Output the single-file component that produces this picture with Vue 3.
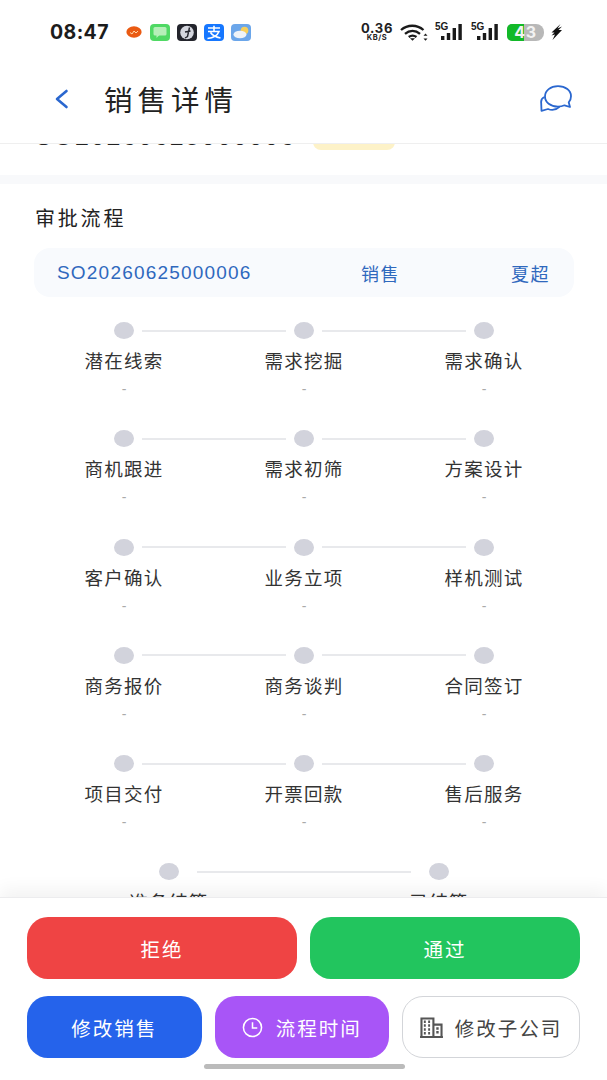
<script setup>
const idLine = { no: 'SO20260625000006', kind: '销售', owner: '夏超' }

// Approval stages, grouped by the row they sit on
const rows = [
  ['潜在线索', '需求挖掘', '需求确认'],
  ['商机跟进', '需求初筛', '方案设计'],
  ['客户确认', '业务立项', '样机测试'],
  ['商务报价', '商务谈判', '合同签订'],
  ['项目交付', '开票回款', '售后服务'],
  ['准备结算', '已结算']
]
</script>

<template>
  <div class="phone">
    <header class="top">
      <div class="status">
        <span class="clock">08:47</span>
        <div class="apps">
          <svg class="app-dot" viewBox="0 0 16 12"><ellipse cx="8" cy="6" rx="7.6" ry="5.8" fill="#ea5a12" /><path d="M4 6.500l2 1.500 2-3 2 2 2-2" fill="none" stroke="#ffd8a8" stroke-width="1" /></svg>
          <svg class="app" viewBox="0 0 20 17"><rect width="20" height="17" rx="4" fill="#4fd964" /><rect x="3.500" y="3" width="13" height="8.500" rx="1.500" fill="#b6efb9" /><path d="M6.500 11v3l3-3z" fill="#b6efb9" /></svg>
          <svg class="app" viewBox="0 0 20 17"><rect width="20" height="17" rx="4" fill="#23242c" /><circle cx="10" cy="8.500" r="6.800" fill="#d4d6de" /><path d="M12.500 3.500l-2 9-2.500 1.500M8 8l5.500-1" fill="none" stroke="#23242c" stroke-width="1.400" /></svg>
          <svg class="app" viewBox="0 0 20 17"><rect width="20" height="17" rx="4" fill="#1677ff" /><path d="M4 4h12M10 1.800v5M4 7.500h11c-1.500 3.800-5.500 6.500-11.500 7M6.500 8.500c2 3 5 4.500 10 5.500" fill="none" stroke="#fff" stroke-width="1.600" /></svg>
          <svg class="app" viewBox="0 0 20 17"><rect width="20" height="17" rx="4" fill="#6ba6ea" /><circle cx="13.500" cy="6.500" r="3.800" fill="#f6cf5c" /><ellipse cx="9" cy="10.500" rx="6.500" ry="3.800" fill="#eef3f8" /></svg>
        </div>
        <div class="sys">
          <div class="speed"><span class="speed-num">0.36</span><span class="speed-unit">KB/S</span></div>
          <svg class="wifi" viewBox="0 0 28 17"><path d="M1 6C7.500 .3 17 .3 23.500 6M5 9.800c4.500-3.800 10.500-3.800 15 0M8.700 13c2.500-1.800 5.300-1.800 7.800 0" fill="none" stroke="#1a1a1a" stroke-width="2.300" /><path d="M10 14.300h5l-2.500 2.500z" fill="#1a1a1a" /><path d="M25.500 9.500l2 2.300h-4zM25.500 16.800l2-2.300h-4z" fill="#1a1a1a" /></svg>
          <div class="net"><span class="net-tag">5G</span><svg class="bars" viewBox="0 0 21 16"><rect x="0" y="12" width="3.400" height="4" /><rect x="5.800" y="9" width="3.400" height="7" /><rect x="11.600" y="4" width="3.400" height="12" /><rect x="17.400" y="0" width="3.400" height="16" /></svg></div>
          <div class="net"><span class="net-tag">5G</span><svg class="bars" viewBox="0 0 21 16"><rect x="0" y="12" width="3.400" height="4" /><rect x="5.800" y="9" width="3.400" height="7" /><rect x="11.600" y="4" width="3.400" height="12" /><rect x="17.400" y="0" width="3.400" height="16" /></svg></div>
          <div class="battery"><span class="battery-fill"></span><span class="battery-num">43</span></div>
          <svg class="bolt" viewBox="0 0 11 16"><path d="M9.500 0L.5 8.500h3L.5 11.500l3.500-1L1.500 16 11 6H7.500L11 2.500 6.500 4.500z" fill="#111" /></svg>
        </div>
      </div>
      <nav class="bar">
        <svg class="back" viewBox="0 0 14 20"><path d="M12 2L2.500 10l9.500 8" fill="none" stroke="#2a67cf" stroke-width="2.600" stroke-linecap="round" stroke-linejoin="round" /></svg>
        <h1 class="title">销售详情</h1>
        <svg class="chat" viewBox="0 0 34 28"><path d="M18 1.200C25.500 1.200 31 5.500 31 11.200 31 13.800 30 16 28.700 17.300L30 22 24.500 20.300C22.500 21.200 20.400 21.600 18 21.600 10.500 21.600 5 17.200 5 11.400 5 5.500 10.500 1.200 18 1.200Z" fill="none" stroke="#2a67cf" stroke-width="1.800" stroke-linejoin="round" /><path d="M4.500 12C2 13 .8 15 1.200 18L1.500 25.800 8 24C11.500 25.500 16 25 19.500 21.800" fill="none" stroke="#2a67cf" stroke-width="1.800" stroke-linejoin="round" /></svg>
      </nav>
    </header>

    <main class="scroller">
      <div class="sheet">
        <section class="summary">
          <span class="summary-no">{{ idLine.no }}</span>
          <span class="summary-tag">待审批</span>
        </section>
        <section class="flow">
          <h2 class="flow-title">审批流程</h2>
          <div class="ident">
            <span class="ident-no">{{ idLine.no }}</span>
            <span class="ident-kind">{{ idLine.kind }}</span>
            <span class="ident-owner">{{ idLine.owner }}</span>
          </div>
          <div v-for="(row, r) in rows" :key="r" class="stage-row">
            <div v-for="(name, i) in row" :key="name" class="stage">
              <div class="track" :class="{ wide: row.length === 2 }">
                <span class="seg" :class="{ off: i === 0 }"></span>
                <span class="dot"></span>
                <span class="seg" :class="{ off: i === row.length - 1 }"></span>
              </div>
              <div class="stage-name">{{ name }}</div>
              <div class="stage-time">-</div>
            </div>
          </div>
        </section>
      </div>
    </main>

    <footer class="actions">
      <div class="pair">
        <button class="btn red">拒绝</button>
        <button class="btn green">通过</button>
      </div>
      <div class="triple">
        <button class="btn blue">修改销售</button>
        <button class="btn purple">
          <svg class="ico" viewBox="0 0 22 22"><circle cx="11" cy="11" r="9.500" fill="none" stroke="#fff" stroke-width="1.600" /><path d="M11 5.500V11.500H16" fill="none" stroke="#fff" stroke-width="1.600" /></svg>
          流程时间
        </button>
        <button class="btn ghost">
          <svg class="ico-b" viewBox="0 0 24 22"><path d="M1.500 21V1.500h12.500V21M14 8h8.500v13M0 21h24" fill="none" stroke="#555" stroke-width="2.200" /><path d="M4 5h2M8.500 5h2M4 9h2M8.500 9h2M4 13h2M8.500 13h2M4 17h2M8.500 17h2M17 12h2.500M17 16h2.500" stroke="#555" stroke-width="2.600" /></svg>
          修改子公司
        </button>
      </div>
      <div class="home"></div>
    </footer>
  </div>
</template>

<style>
html, body { margin: 0; background: #fff; }
</style>

<style scoped>
.phone {
  width: 607px;
  height: 1080px;
  display: flex;
  flex-direction: column;
  overflow: hidden;
  background: #fff;
  font-family: "Noto Sans CJK SC", "Liberation Sans", sans-serif;
  color: #222;
}
.top {
  height: 143px;
  flex: none;
  background: #fff;
  border-bottom: 1px solid #efefef;
  box-sizing: content-box;
  position: relative;
  z-index: 2;
}
.status {
  height: 64px;
  display: flex;
  align-items: center;
  padding: 0 0 0 50px;
}
.clock {
  font: 700 19.500px/24px Inter, "Liberation Sans", sans-serif;
  letter-spacing: 0.4px;
  color: #1c1c1c;
  width: 76px;
  white-space: nowrap;
}
.apps { display: flex; align-items: center; gap: 7px; }
.app { width: 20px; height: 17px; display: block; }
.app-dot { width: 16px; height: 12px; display: block; margin-right: 1px; }
.sys { display: flex; align-items: center; margin-left: 110px; }
.speed { display: flex; flex-direction: column; align-items: center; width: 32px; font-family: Inter, "Liberation Sans", sans-serif; color: #222; }
.speed-num { font-size: 13px; line-height: 10px; font-weight: 700; letter-spacing: 0.7px; }
.speed-unit { font-size: 7.500px; line-height: 7px; font-weight: 700; letter-spacing: 0.6px; margin-top: 1px; }
.wifi { width: 28px; height: 17px; margin-left: 7px; }
.net { position: relative; width: 27px; height: 16px; margin-left: 9px; }
.wifi + .net { margin-left: 7px; }
.net-tag { position: absolute; left: 0; top: -2px; font: 700 10px/10px "Liberation Sans", sans-serif; color: #1a1a1a; background: #fff; padding-right: 1px; }
.bars { position: absolute; right: 0; top: 0; width: 21px; height: 16px; fill: #1a1a1a; }
.battery {
  position: relative;
  margin-left: 9px;
  width: 37px;
  height: 17px;
  border-radius: 5px 8px 8px 5px;
  background: #b8b8b8;
  display: flex;
  align-items: center;
  justify-content: center;
  overflow: hidden;
}
.battery-fill { position: absolute; left: 0; top: 0; bottom: 0; width: 17px; background: #12b928; }
.battery-num { position: relative; font: 700 16px/17px Inter, "Liberation Sans", sans-serif; color: #f2f2f2; letter-spacing: 0.6px; }
.bolt { width: 11px; height: 16px; margin-left: 7px; }

.bar { height: 70px; display: flex; align-items: center; padding: 0 33px 0 54px; box-sizing: border-box; }
.back { width: 15px; height: 20px; display: block; }
.title { margin: 0 0 0 35px; font-size: 28.500px; line-height: 38px; font-weight: 400; letter-spacing: 5px; color: #222; flex: 1; }
.chat { width: 34px; height: 28px; display: block; }

.scroller { flex: 1; min-height: 0; overflow: hidden; background: #fff; }
.sheet { background: #f8f9fb; margin-top: -29px; }
.summary {
  display: flex;
  align-items: center;
  gap: 17px;
  height: 60px;
  padding: 0 35px;
  background: #fff;
  box-sizing: border-box;
  margin-bottom: 9px;
}
.summary-no { font: 400 25px/30px "Liberation Sans", sans-serif; letter-spacing: 1.900px; color: #222; position: relative; top: -9px; white-space: nowrap; }
.summary-tag { width: 82px; height: 27px; border-radius: 8px; background: #fdf2c8; color: #fdf2c8; font-size: 12px; line-height: 27px; text-align: center; position: relative; top: -9px; }

.flow { background: #fff; padding: 19px 33px 0 34px; }
.flow-title { margin: 0 0 15px; font-size: 20px; line-height: 30px; font-weight: 400; letter-spacing: 2.800px; color: #222; text-indent: 1px; }
.ident {
  height: 49px;
  border-radius: 16px;
  background: #f8fafd;
  display: grid;
  grid-template-columns: 304px auto 1fr;
  align-items: center;
  padding: 0 24px 0 23px;
  color: #2f68bd;
  font-size: 18px;
  margin-bottom: 25px;
}
.ident-no { font-family: "Liberation Sans", sans-serif; font-size: 19px; letter-spacing: 1.200px; }
.ident-kind { letter-spacing: 1.500px; }
.ident-owner { text-align: right; letter-spacing: 1.500px; }

.stage-row { display: flex; height: 108.300px; }
.stage { flex: 1; min-width: 0; text-align: center; }
.track { display: flex; align-items: center; gap: 8px; height: 17px; }
.track.wide { gap: 18px; }
.seg { flex: 1; height: 2px; background: #e8e9ec; }
.seg.off { visibility: hidden; }
.dot { flex: none; width: 20px; height: 17px; border-radius: 50%; background: #d2d3dc; }
.stage-name { margin-top: 8px; font-size: 18.500px; line-height: 26px; letter-spacing: 1.200px; color: #333; }
.stage-time { margin-top: 7px; font: 400 14px/18px "Liberation Sans", sans-serif; color: #aaa; }

.actions {
  flex: none;
  height: 183px;
  box-sizing: border-box;
  padding: 19px 27px 0;
  background: #fff;
  border-top: 1px solid #ececee;
  box-shadow: 0 -8px 16px rgba(0, 0, 0, 0.05);
  position: relative;
  z-index: 2;
}
.pair { display: grid; grid-template-columns: 1fr 1fr; gap: 13px; }
.triple { display: grid; grid-template-columns: 174.500px 174.500px 178px; gap: 13px; margin-top: 17px; }
.btn {
  height: 62px;
  border: 0;
  border-radius: 21px;
  padding: 0;
  color: #fff;
  font-family: inherit;
  font-size: 19.500px;
  letter-spacing: 2px;
  display: flex;
  align-items: center;
  justify-content: center;
  white-space: nowrap;
}
.red { background: #ef4444; }
.green { background: #22c55e; }
.blue { background: #2563eb; }
.purple { background: #a855f7; }
.ghost { background: #fff; border: 1.500px solid #d3d5d9; color: #444; }
.ico { width: 21px; height: 21px; margin-right: 13px; }
.ico-b { width: 23px; height: 21px; margin-right: 12px; }
.home { width: 201px; height: 5px; border-radius: 3px; background: #bbb; margin: 6px 0 0 177px; }
</style>
